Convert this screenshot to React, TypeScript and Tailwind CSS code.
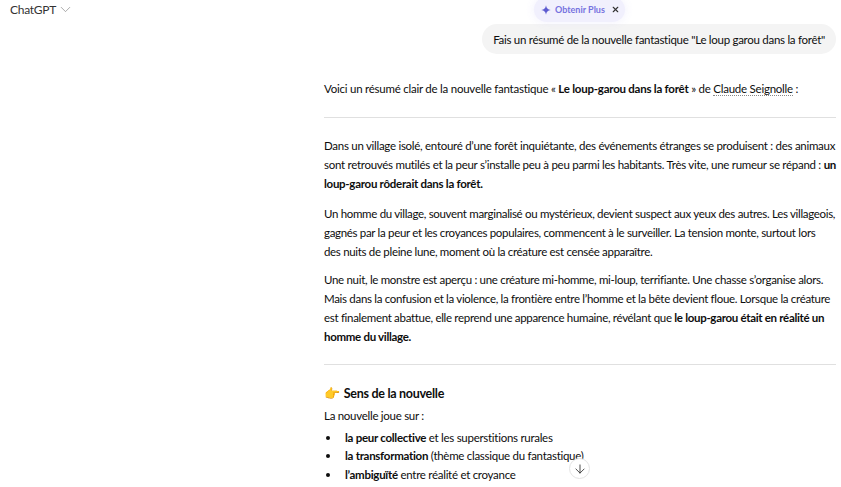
import { ChevronDown, ArrowDown, X } from "lucide-react";

export default function App() {
  return (
    <div className="relative h-[487px] w-[841px] overflow-hidden bg-white text-[#0d0d0d] font-['Lato',sans-serif] text-[11.5px] leading-[19px] tracking-[-0.28px]">
      {/* Header */}
      <div className="absolute left-[10px] top-0 flex h-[19px] items-center text-[12px] text-[#333]">
        <span>ChatGPT</span>
        <ChevronDown size={17} strokeWidth={1} className="ml-[1px] text-[#888]" />
      </div>

      {/* Upsell pill */}
      <div className="absolute left-[534px] top-[-3px] flex h-[25px] w-[91px] items-center gap-[4px] rounded-full bg-[#f1f0fd] pl-[7px] text-[9px] font-bold tracking-normal text-[#7672e0] shadow-[0_0_10px_rgba(120,110,240,0.1)]">
        <svg width="10" height="10" viewBox="0 0 10 10" fill="#5d5bd0">
          <path d="M5 0.3 C5.4 3.2 6.8 4.6 9.7 5 C6.8 5.4 5.4 6.8 5 9.7 C4.6 6.8 3.2 5.4 0.3 5 C3.2 4.6 4.6 3.2 5 0.3Z" />
        </svg>
        <span>Obtenir Plus</span>
        <X size={9} strokeWidth={3} className="ml-[2px] text-[#333]" />
      </div>

      {/* Conversation */}
      <div className="flex flex-col pl-[324px] pr-[5px] pt-[24px]">
        <div className="self-end whitespace-nowrap rounded-[15px] bg-[#f4f4f4] px-[11px] py-[5.5px]">
          Fais un résumé de la nouvelle fantastique "Le loup garou dans la forêt"
        </div>

        <p className="mt-[25px] whitespace-nowrap tracking-[-0.24px]">
          Voici un résumé clair de la nouvelle fantastique « <b className="font-bold">Le loup-garou dans la forêt</b> » de{" "}
          <span className="border-b border-dotted border-[#888]">Claude Seignolle</span> :
        </p>

        <hr className="mt-[19px] border-[#e0e0e0]" />

        <p className="mt-[18px] whitespace-nowrap">
          Dans un village isolé, entouré d’une forêt inquiétante, des événements étranges se produisent : des animaux
          <br />
          sont retrouvés mutilés et la peur s’installe peu à peu parmi les habitants. Très vite, une rumeur se répand : <b className="font-bold">un</b>
          <br />
          <b className="font-bold">loup-garou rôderait dans la forêt.</b>
        </p>
        <p className="mt-[11px] whitespace-nowrap tracking-[-0.32px]">
          Un homme du village, souvent marginalisé ou mystérieux, devient suspect aux yeux des autres. Les villageois,
          <br />
          gagnés par la peur et les croyances populaires, commencent à le surveiller. La tension monte, surtout lors
          <br />
          des nuits de pleine lune, moment où la créature est censée apparaître.
        </p>
        <p className="mt-[9px] whitespace-nowrap tracking-[-0.31px]">
          Une nuit, le monstre est aperçu : une créature mi-homme, mi-loup, terrifiante. Une chasse s’organise alors.
          <br />
          Mais dans la confusion et la violence, la frontière entre l’homme et la bête devient floue. Lorsque la créature
          <br />
          est finalement abattue, elle reprend une apparence humaine, révélant que <b className="font-bold">le loup-garou était en réalité un</b>
          <br />
          <b className="font-bold">homme du village.</b>
        </p>

        <hr className="mt-[18px] border-[#e0e0e0]" />

        <h3 className="mt-[18.5px] flex items-center gap-[4px] text-[12.5px] font-bold">
          <span className="text-[13px]">👉</span> Sens de la nouvelle
        </h3>
        <p className="mt-[3px]">La nouvelle joue sur :</p>
        <ul className="mt-[4px] flex flex-col leading-[18.5px]">
          <li className="flex items-center gap-[15px] pl-[2px]">
            <span className="h-[4px] w-[4px] rounded-full bg-[#0d0d0d]" />
            <span><b className="font-bold">la peur collective</b> et les superstitions rurales</span>
          </li>
          <li className="flex items-center gap-[15px] pl-[2px]">
            <span className="h-[4px] w-[4px] rounded-full bg-[#0d0d0d]" />
            <span><b className="font-bold">la transformation</b> (thème classique du fantastique)</span>
          </li>
          <li className="flex items-center gap-[15px] pl-[2px]">
            <span className="h-[4px] w-[4px] rounded-full bg-[#0d0d0d]" />
            <span><b className="font-bold">l’ambiguïté</b> entre réalité et croyance</span>
          </li>
        </ul>
      </div>

      {/* Scroll to bottom */}
      <button className="absolute left-[569px] top-[458px] flex h-[21px] w-[21px] items-center justify-center rounded-full border border-[#e3e3e3] bg-white">
        <ArrowDown size={14} strokeWidth={1.5} className="text-[#333]" />
      </button>
    </div>
  );
}
